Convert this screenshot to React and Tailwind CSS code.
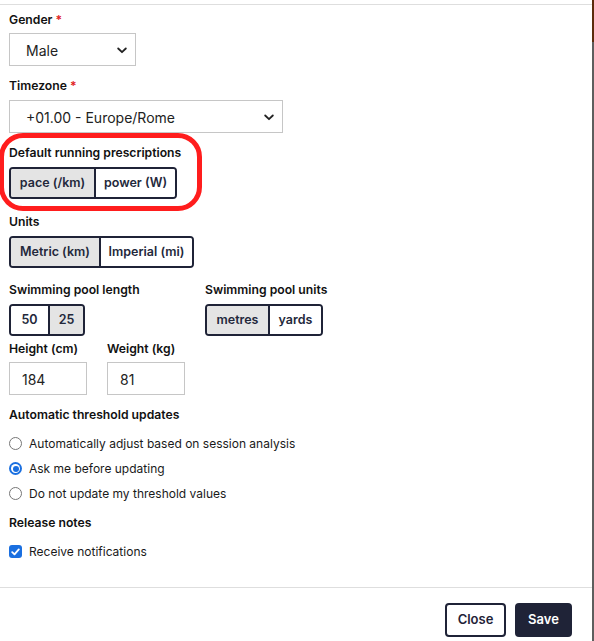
import React from "react";

const font = { fontFamily: "Inter, 'Noto Sans', sans-serif" };

function Label({ children, req, className = "" }) {
  return (
    <div className={"text-[12.2px] leading-[18px] font-semibold text-[#111] " + className}>
      {children}
      {req && <span className="text-[#e0201c]"> *</span>}
    </div>
  );
}

function Chevron() {
  return (
    <svg width="10" height="7" viewBox="0 0 10 7" className="shrink-0">
      <path d="M1.2 1.5 L5 5.2 L8.8 1.5" fill="none" stroke="#222" strokeWidth="1.8" strokeLinecap="round" strokeLinejoin="round" />
    </svg>
  );
}

function Select({ value, width }) {
  return (
    <div className={"flex items-center justify-between h-[33px] border border-[#c6c6c6] bg-white pl-[16px] pr-[8px] pt-[2px] text-[14px] text-[#222] " + width}>
      <span>{value}</span>
      <Chevron />
    </div>
  );
}

function Toggle({ items, active }) {
  return (
    <div className="inline-flex h-[32px] border-2 border-[#1f2337] rounded-[4px] overflow-hidden">
      {items.map((it, i) => (
        <div
          key={it.label}
          className={
            "flex items-center justify-center text-[12.5px] font-semibold text-[#23283b] " +
            it.cls +
            (i > 0 ? " border-l-2 border-[#1f2337]" : "") +
            (i === active ? " bg-[#e4e4e4]" : " bg-white")
          }
        >
          {it.label}
        </div>
      ))}
    </div>
  );
}

function Radio({ checked }) {
  if (checked) {
    return (
      <div className="w-[13px] h-[13px] rounded-full bg-[#1a6fe0] flex items-center justify-center shrink-0">
        <div className="w-[9px] h-[9px] rounded-full bg-white flex items-center justify-center">
          <div className="w-[6px] h-[6px] rounded-full bg-[#1a6fe0]" />
        </div>
      </div>
    );
  }
  return <div className="w-[13px] h-[13px] rounded-full border border-[#767676] bg-white shrink-0" />;
}

function Input({ value }) {
  return (
    <div className="w-[78px] h-[33px] border border-[#c6c6c6] bg-white flex items-center pl-[12px] pt-[1px] text-[14px] text-[#222]">
      {value}
    </div>
  );
}

export default function App() {
  return (
    <div className="flex h-[641px] w-[594px] bg-white overflow-hidden" style={font}>
      <div className="flex-1 flex flex-col relative">
        <div className="h-[5px] border-b border-[#dedede] shrink-0" />
        <div className="flex-1 pl-[9px]">
          <Label req className="mt-[6px]">Gender</Label>
          <div className="mt-[4px]">
            <Select value="Male" width="w-[127px]" />
          </div>

          <Label req className="mt-[11px]">Timezone</Label>
          <div className="mt-[5px]">
            <Select value="+01.00 - Europe/Rome" width="w-[274px]" />
          </div>

          <Label className="mt-[11px]">Default running prescriptions</Label>
          <div className="mt-[5px]">
            <Toggle
              active={0}
              items={[
                { label: "pace (/km)", cls: "w-[83px]" },
                { label: "power (W)", cls: "w-[81px]" },
              ]}
            />
          </div>

          <Label className="mt-[14px]">Units</Label>
          <div className="mt-[5px]">
            <Toggle
              active={0}
              items={[
                { label: "Metric (km)", cls: "w-[88px]" },
                { label: "Imperial (mi)", cls: "w-[93px]" },
              ]}
            />
          </div>

          <div className="flex mt-[13px]">
            <div className="w-[196px]">
              <Label>Swimming pool length</Label>
              <div className="mt-[5px]">
                <Toggle
                  active={1}
                  items={[
                    { label: "50", cls: "w-[37px]" },
                    { label: "25", cls: "w-[35px]" },
                  ]}
                />
              </div>
            </div>
            <div>
              <Label>Swimming pool units</Label>
              <div className="mt-[5px]">
                <Toggle
                  active={0}
                  items={[
                    { label: "metres", cls: "w-[61px]" },
                    { label: "yards", cls: "w-[53px]" },
                  ]}
                />
              </div>
            </div>
          </div>

          <div className="flex mt-[4px]">
            <div className="w-[98px]">
              <Label>Height (cm)</Label>
              <div className="mt-[4px]">
                <Input value="184" />
              </div>
            </div>
            <div>
              <Label>Weight (kg)</Label>
              <div className="mt-[4px]">
                <Input value="81" />
              </div>
            </div>
          </div>

          <Label className="mt-[11px]">Automatic threshold updates</Label>
          <div className="mt-[7px] text-[12px] text-[#1a1a1a]">
            {[
              ["Automatically adjust based on session analysis", false],
              ["Ask me before updating", true],
              ["Do not update my threshold values", false],
            ].map(([t, c]) => (
              <div key={t} className="flex items-center h-[25px] gap-[7px]">
                <Radio checked={c} />
                <span>{t}</span>
              </div>
            ))}
          </div>

          <Label className="mt-[8px]">Release notes</Label>
          <div className="mt-[7px] flex items-center h-[25px] gap-[7px] text-[12px] text-[#1a1a1a]">
            <div className="w-[13px] h-[13px] rounded-[3px] bg-[#1a6fe0] flex items-center justify-center shrink-0">
              <svg width="9" height="8" viewBox="0 0 9 8">
                <path d="M1.2 4.2 L3.5 6.4 L7.8 1.4" fill="none" stroke="white" strokeWidth="1.8" strokeLinecap="round" strokeLinejoin="round" />
              </svg>
            </div>
            <span>Receive notifications</span>
          </div>
        </div>

        <div className="h-[54px] border-t border-[#dedede] shrink-0 flex justify-end items-start pt-[15px] pr-[20px] gap-[9px]">
          <div className="w-[61px] h-[34px] border-2 border-[#1f2337] rounded-[4px] bg-white flex items-center justify-center text-[13px] font-semibold text-[#1f2337]">
            Close
          </div>
          <div className="w-[57px] h-[34px] rounded-[4px] bg-[#1f2337] flex items-center justify-center text-[13px] font-semibold text-white">
            Save
          </div>
        </div>

        <div className="absolute left-[-1px] top-[133px] w-[203px] h-[78px] border-[5px] border-[#ff1d1d] rounded-[24px] pointer-events-none" />
      </div>
      <div className="w-[2px] flex flex-col shrink-0">
        <div className="h-[42px] bg-[#5c2c0c]" />
        <div className="flex-1 bg-[#5e5e5e]" />
      </div>
    </div>
  );
}
